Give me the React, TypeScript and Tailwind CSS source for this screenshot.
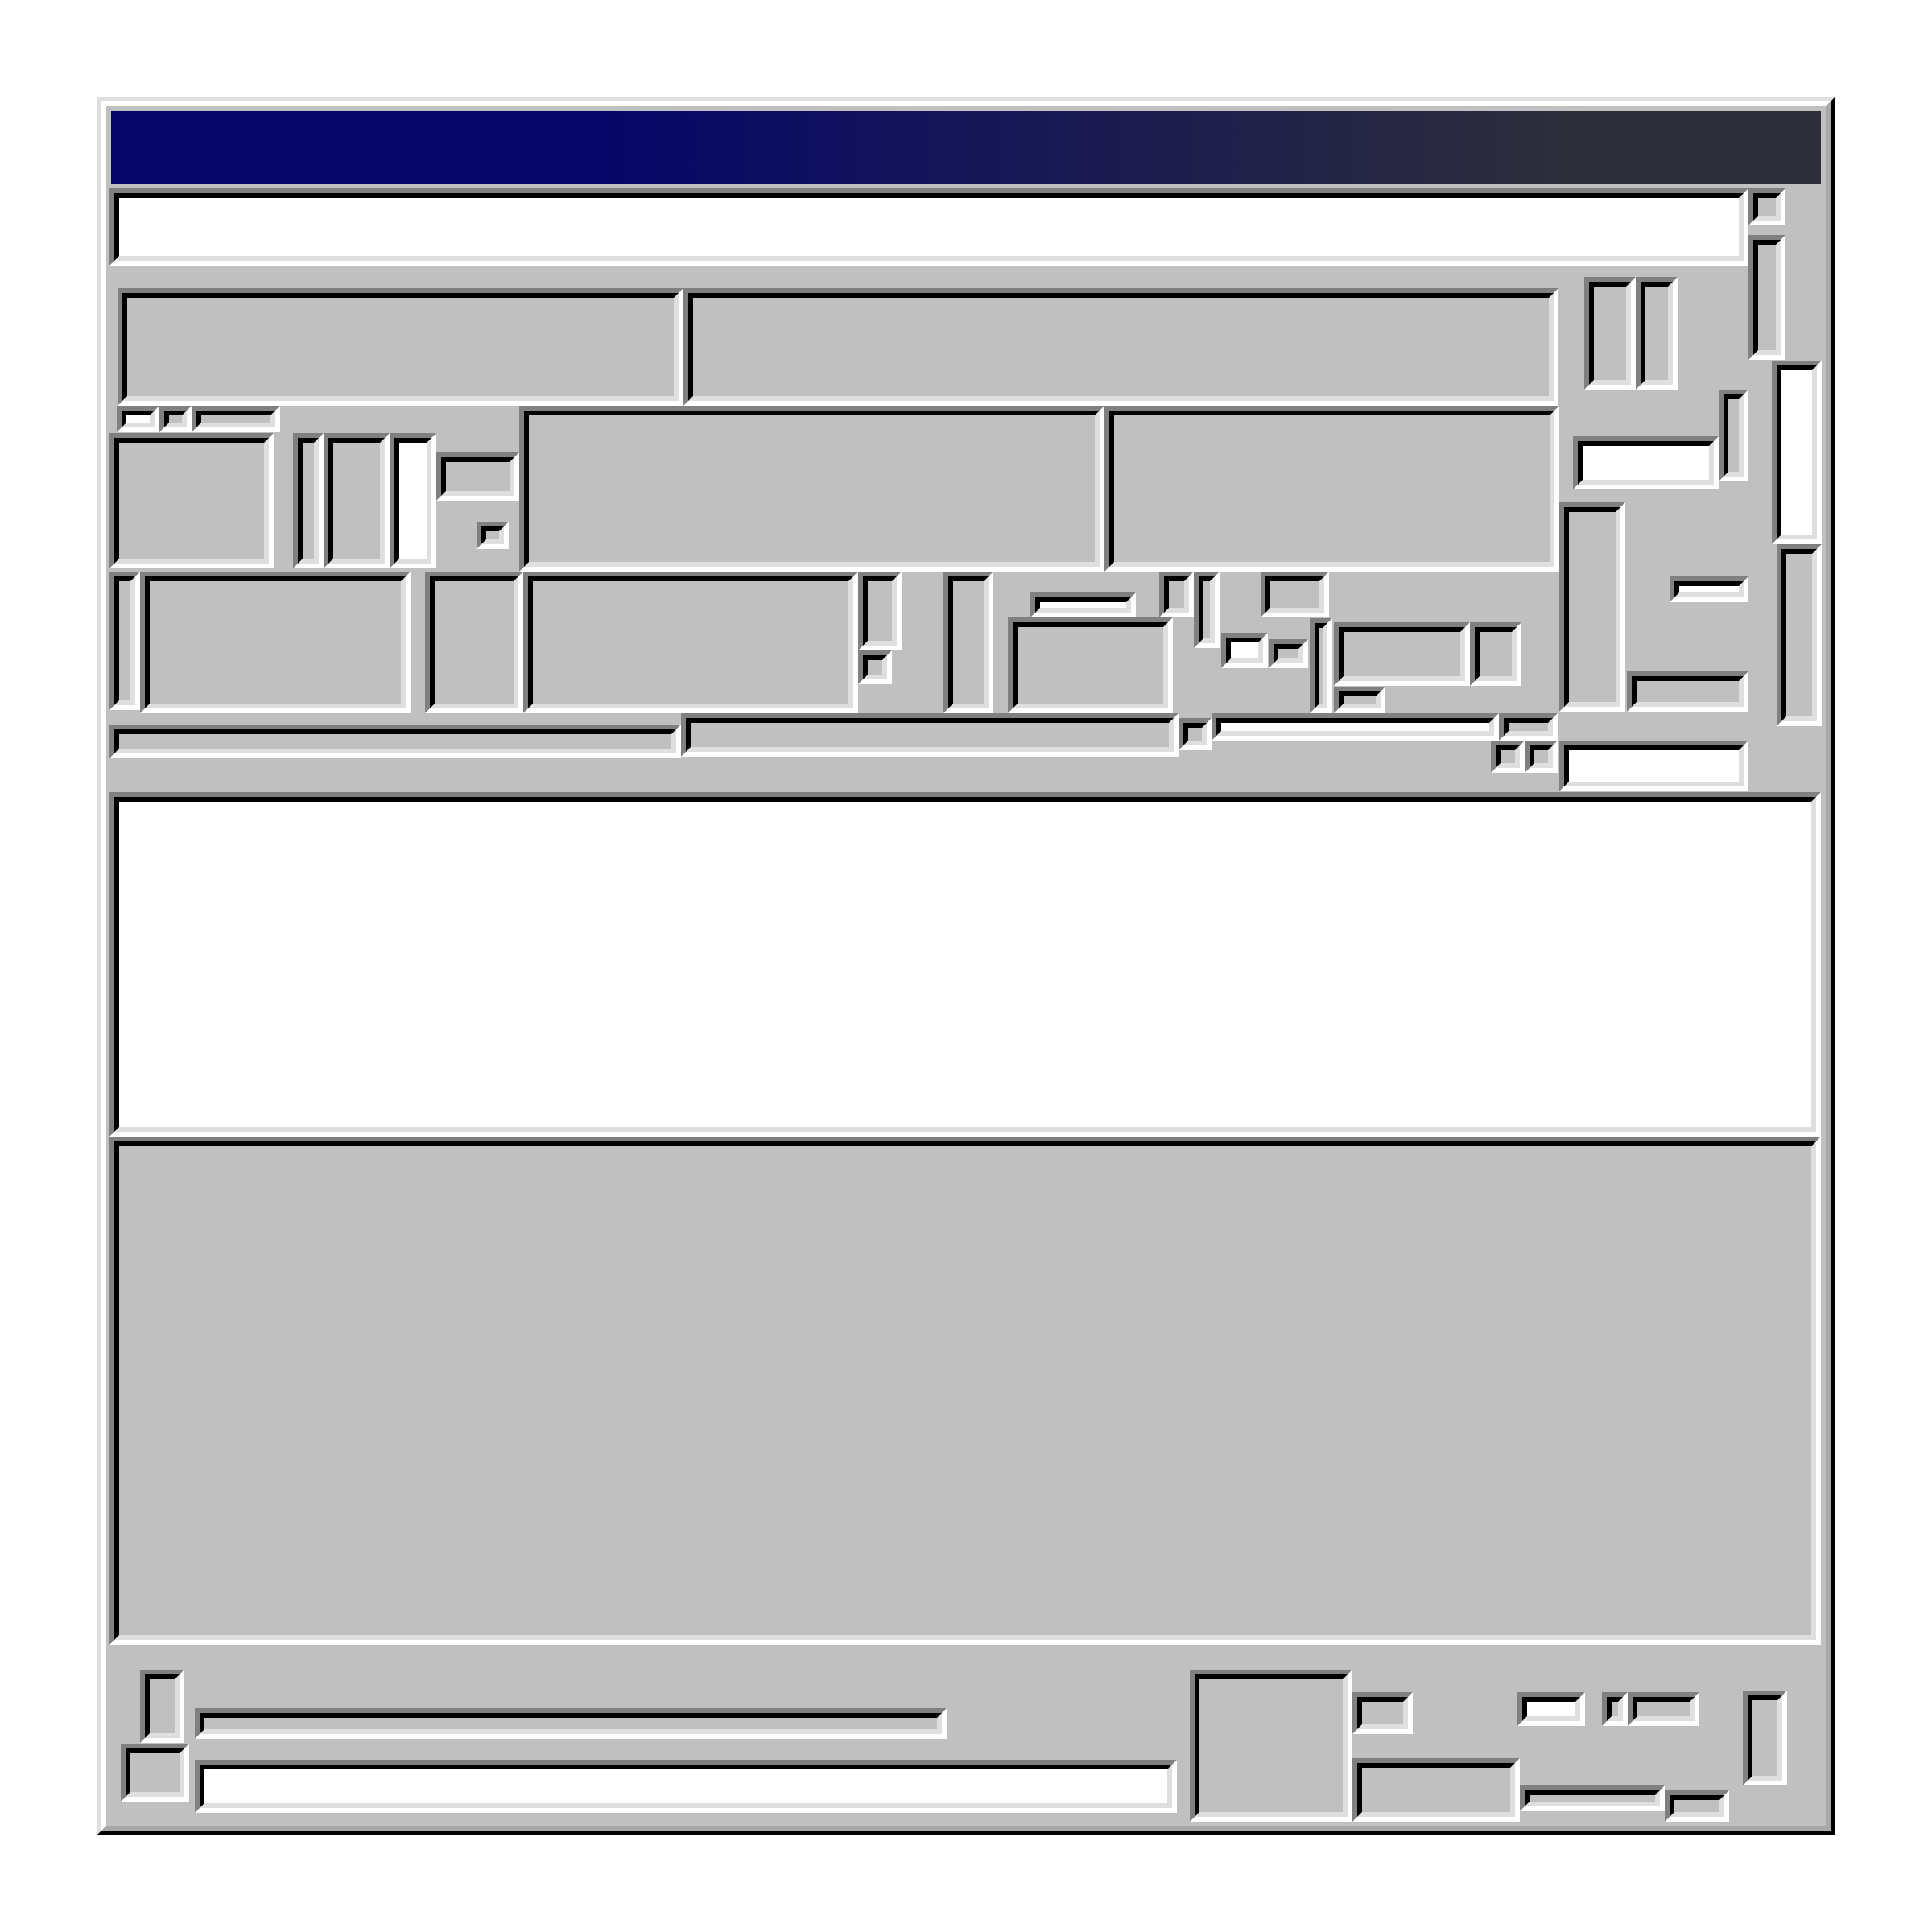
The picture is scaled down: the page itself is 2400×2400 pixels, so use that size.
// Win95-style window made of sunken fields, no text

type FieldProps = { className?: string; white?: boolean };

// sunken field: dark outer top/left, black inner, light/white bottom/right
function Field({ className = "", white = false }: FieldProps) {
  return (
    <div className={`shrink-0 border-[6px] border-t-[#808080] border-l-[#808080] border-r-white border-b-white ${className}`}>
      <div
        className={`h-full w-full border-[6px] border-t-black border-l-black border-r-[#dfdfdf] border-b-[#dfdfdf] ${
          white ? "bg-white" : "bg-[#c0c0c0]"
        }`}
      />
    </div>
  );
}

export default function App() {
  return (
    <div className="w-[2400px] h-[2400px] bg-white p-[120px]">
      <div className="w-[2160px] h-[2160px] border-[6px] border-t-[#dfdfdf] border-l-[#dfdfdf] border-r-black border-b-black">
        <div className="h-full flex flex-col bg-[#c0c0c0] border-[6px] border-t-white border-l-white border-r-[#a8a8a8] border-b-[#a8a8a8] pt-[6px] pl-[4px] pr-[4px]">
          {/* title bar */}
          <div className="shrink-0 ml-[2px] mr-[2px] h-[90px] bg-[linear-gradient(90deg,#06066a_28%,#2e2e3a_86%)]" />

          {/* top area */}
          <div className="mt-[6px] flex h-[750px] shrink-0">
            <div className="w-[2036px] flex flex-col shrink-0">
              <Field white className="w-[2036px] h-[96px]" />

              {/* band 1 */}
              <div className="flex items-start h-[174px] shrink-0">
                <Field className="ml-[10px] mt-[28px] w-[703px] h-[146px]" />
                <Field className="mt-[28px] w-[1087px] h-[146px]" />
                <Field className="ml-[32px] mt-[14px] w-[64px] h-[140px]" />
                <Field className="mt-[14px] w-[52px] h-[140px]" />
              </div>

              <div className="flex h-[480px] shrink-0">
                {/* lower left */}
                <div className="w-[1801px] flex flex-col shrink-0">
                  {/* band 2 */}
                  <div className="flex items-start h-[206px] shrink-0">
                    <div className="w-[509px] flex flex-col shrink-0">
                      <div className="flex ml-[9px] h-[33px]">
                        <Field white className="w-[53px] h-[33px]" />
                        <Field className="w-[40px] h-[33px]" />
                        <Field className="w-[110px] h-[33px]" />
                      </div>
                      <div className="flex items-start mt-[1px]">
                        <Field className="w-[204px] h-[168px]" />
                        <Field className="ml-[24px] w-[38px] h-[168px]" />
                        <Field className="w-[82px] h-[168px]" />
                        <Field white className="w-[58px] h-[168px]" />
                        <div className="flex flex-col">
                          <Field className="mt-[24px] w-[103px] h-[60px]" />
                          <Field className="ml-[50px] mt-[26px] w-[40px] h-[34px]" />
                        </div>
                      </div>
                    </div>
                    <Field className="w-[727px] h-[206px]" />
                    <Field className="w-[565px] h-[206px]" />
                  </div>

                  {/* band 3 */}
                  <div className="flex items-start h-[176px] shrink-0">
                    <Field className="w-[38px] h-[172px]" />
                    <Field className="w-[336px] h-[176px]" />
                    <Field className="ml-[18px] w-[122px] h-[176px]" />
                    <Field className="w-[416px] h-[176px]" />
                    <div className="flex flex-col items-start">
                      <Field className="w-[54px] h-[98px]" />
                      <Field className="w-[42px] h-[42px]" />
                    </div>
                    <Field className="ml-[52px] w-[62px] h-[176px]" />
                    <div className="ml-[18px] flex flex-col">
                      <div className="flex items-start h-[57px]">
                        <Field white className="ml-[28px] mt-[26px] w-[131px] h-[31px]" />
                        <Field className="ml-[29px] w-[43px] h-[57px]" />
                      </div>
                      <Field className="w-[205px] h-[119px]" />
                    </div>
                    <Field className="w-[32px] h-[95px]" />
                    <div className="flex flex-col items-start">
                      <Field className="ml-[51px] w-[85px] h-[57px]" />
                      <div className="flex items-start">
                        <Field white className="ml-[2px] mt-[19px] w-[58px] h-[44px]" />
                        <Field className="ml-[1px] mt-[27px] w-[49px] h-[36px]" />
                        <Field className="ml-[2px] mt-[1px] w-[28px] h-[118px]" />
                        <div className="ml-[2px] flex flex-col items-start">
                          <div className="mt-[6px] flex">
                            <Field className="w-[169px] h-[79px]" />
                            <Field className="w-[64px] h-[79px]" />
                          </div>
                          <Field className="mt-[1px] w-[64px] h-[33px]" />
                        </div>
                      </div>
                    </div>
                  </div>

                  {/* band 4 */}
                  <div className="flex items-start h-[98px] shrink-0">
                    <Field className="mt-[14px] w-[710px] h-[42px]" />
                    <Field className="w-[618px] h-[54px]" />
                    <Field className="mt-[6px] w-[41px] h-[40px]" />
                    <div className="flex flex-col">
                      <div className="flex">
                        <Field white className="w-[357px] h-[34px]" />
                        <Field className="w-[73px] h-[34px]" />
                      </div>
                      <div className="flex ml-[347px]">
                        <Field className="w-[42px] h-[40px]" />
                        <Field className="w-[41px] h-[40px]" />
                      </div>
                    </div>
                  </div>
                </div>

                {/* lower right */}
                <div className="w-[235px] flex flex-col shrink-0">
                  <div className="flex items-start">
                    <Field white className="ml-[17px] mt-[38px] w-[181px] h-[66px]" />
                    <Field className="-mt-[20px] w-[37px] h-[114px]" />
                  </div>
                  <div className="flex items-start mt-[16px]">
                    <Field className="w-[82px] h-[260px]" />
                    <div className="w-[153px] flex flex-col items-end">
                      <Field white className="mt-[92px] w-[98px] h-[32px]" />
                      <Field className="mt-[86px] w-[151px] h-[50px]" />
                    </div>
                  </div>
                  <Field white className="mt-[36px] w-[235px] h-[63px]" />
                </div>
              </div>
            </div>

            {/* right column */}
            <div className="w-[92px] flex flex-col items-start shrink-0">
              <Field className="w-[46px] h-[46px]" />
              <Field className="mt-[12px] w-[46px] h-[155px]" />
              <Field white className="ml-[29px] mt-[1px] w-[62px] h-[228px]" />
              <Field className="ml-[35px] w-[56px] h-[226px]" />
            </div>
          </div>

          {/* big panels */}
          <Field white className="w-[2126px] h-[428px]" />
          <Field className="w-[2126px] h-[631px]" />

          {/* bottom strip */}
          <div className="flex items-start h-[221px] shrink-0">
            <div className="ml-[14px] flex flex-col items-start">
              <Field className="ml-[24px] mt-[31px] w-[55px] h-[91px]" />
              <Field className="mt-[1px] w-[85px] h-[72px]" />
            </div>
            <div className="ml-[7px] flex flex-col items-start">
              <Field className="mt-[79px] w-[934px] h-[38px]" />
              <Field white className="mt-[26px] w-[1220px] h-[66px]" />
            </div>
            <Field className="ml-[16px] mt-[31px] w-[202px] h-[189px]" />
            <div className="w-[468px] flex flex-col shrink-0">
              <div className="flex items-start mt-[59px]">
                <Field className="w-[75px] h-[52px]" />
                <Field white className="ml-[130px] w-[84px] h-[42px]" />
                <Field className="ml-[21px] w-[32px] h-[42px]" />
                <Field className="w-[89px] h-[42px]" />
              </div>
              <div className="flex items-start mt-[30px]">
                <Field className="w-[208px] h-[79px]" />
                <Field className="mt-[34px] w-[180px] h-[32px]" />
                <Field className="mt-[40px] w-[80px] h-[39px]" />
              </div>
            </div>
            <Field className="ml-[17px] mt-[57px] w-[55px] h-[118px]" />
          </div>
        </div>
      </div>
    </div>
  );
}
